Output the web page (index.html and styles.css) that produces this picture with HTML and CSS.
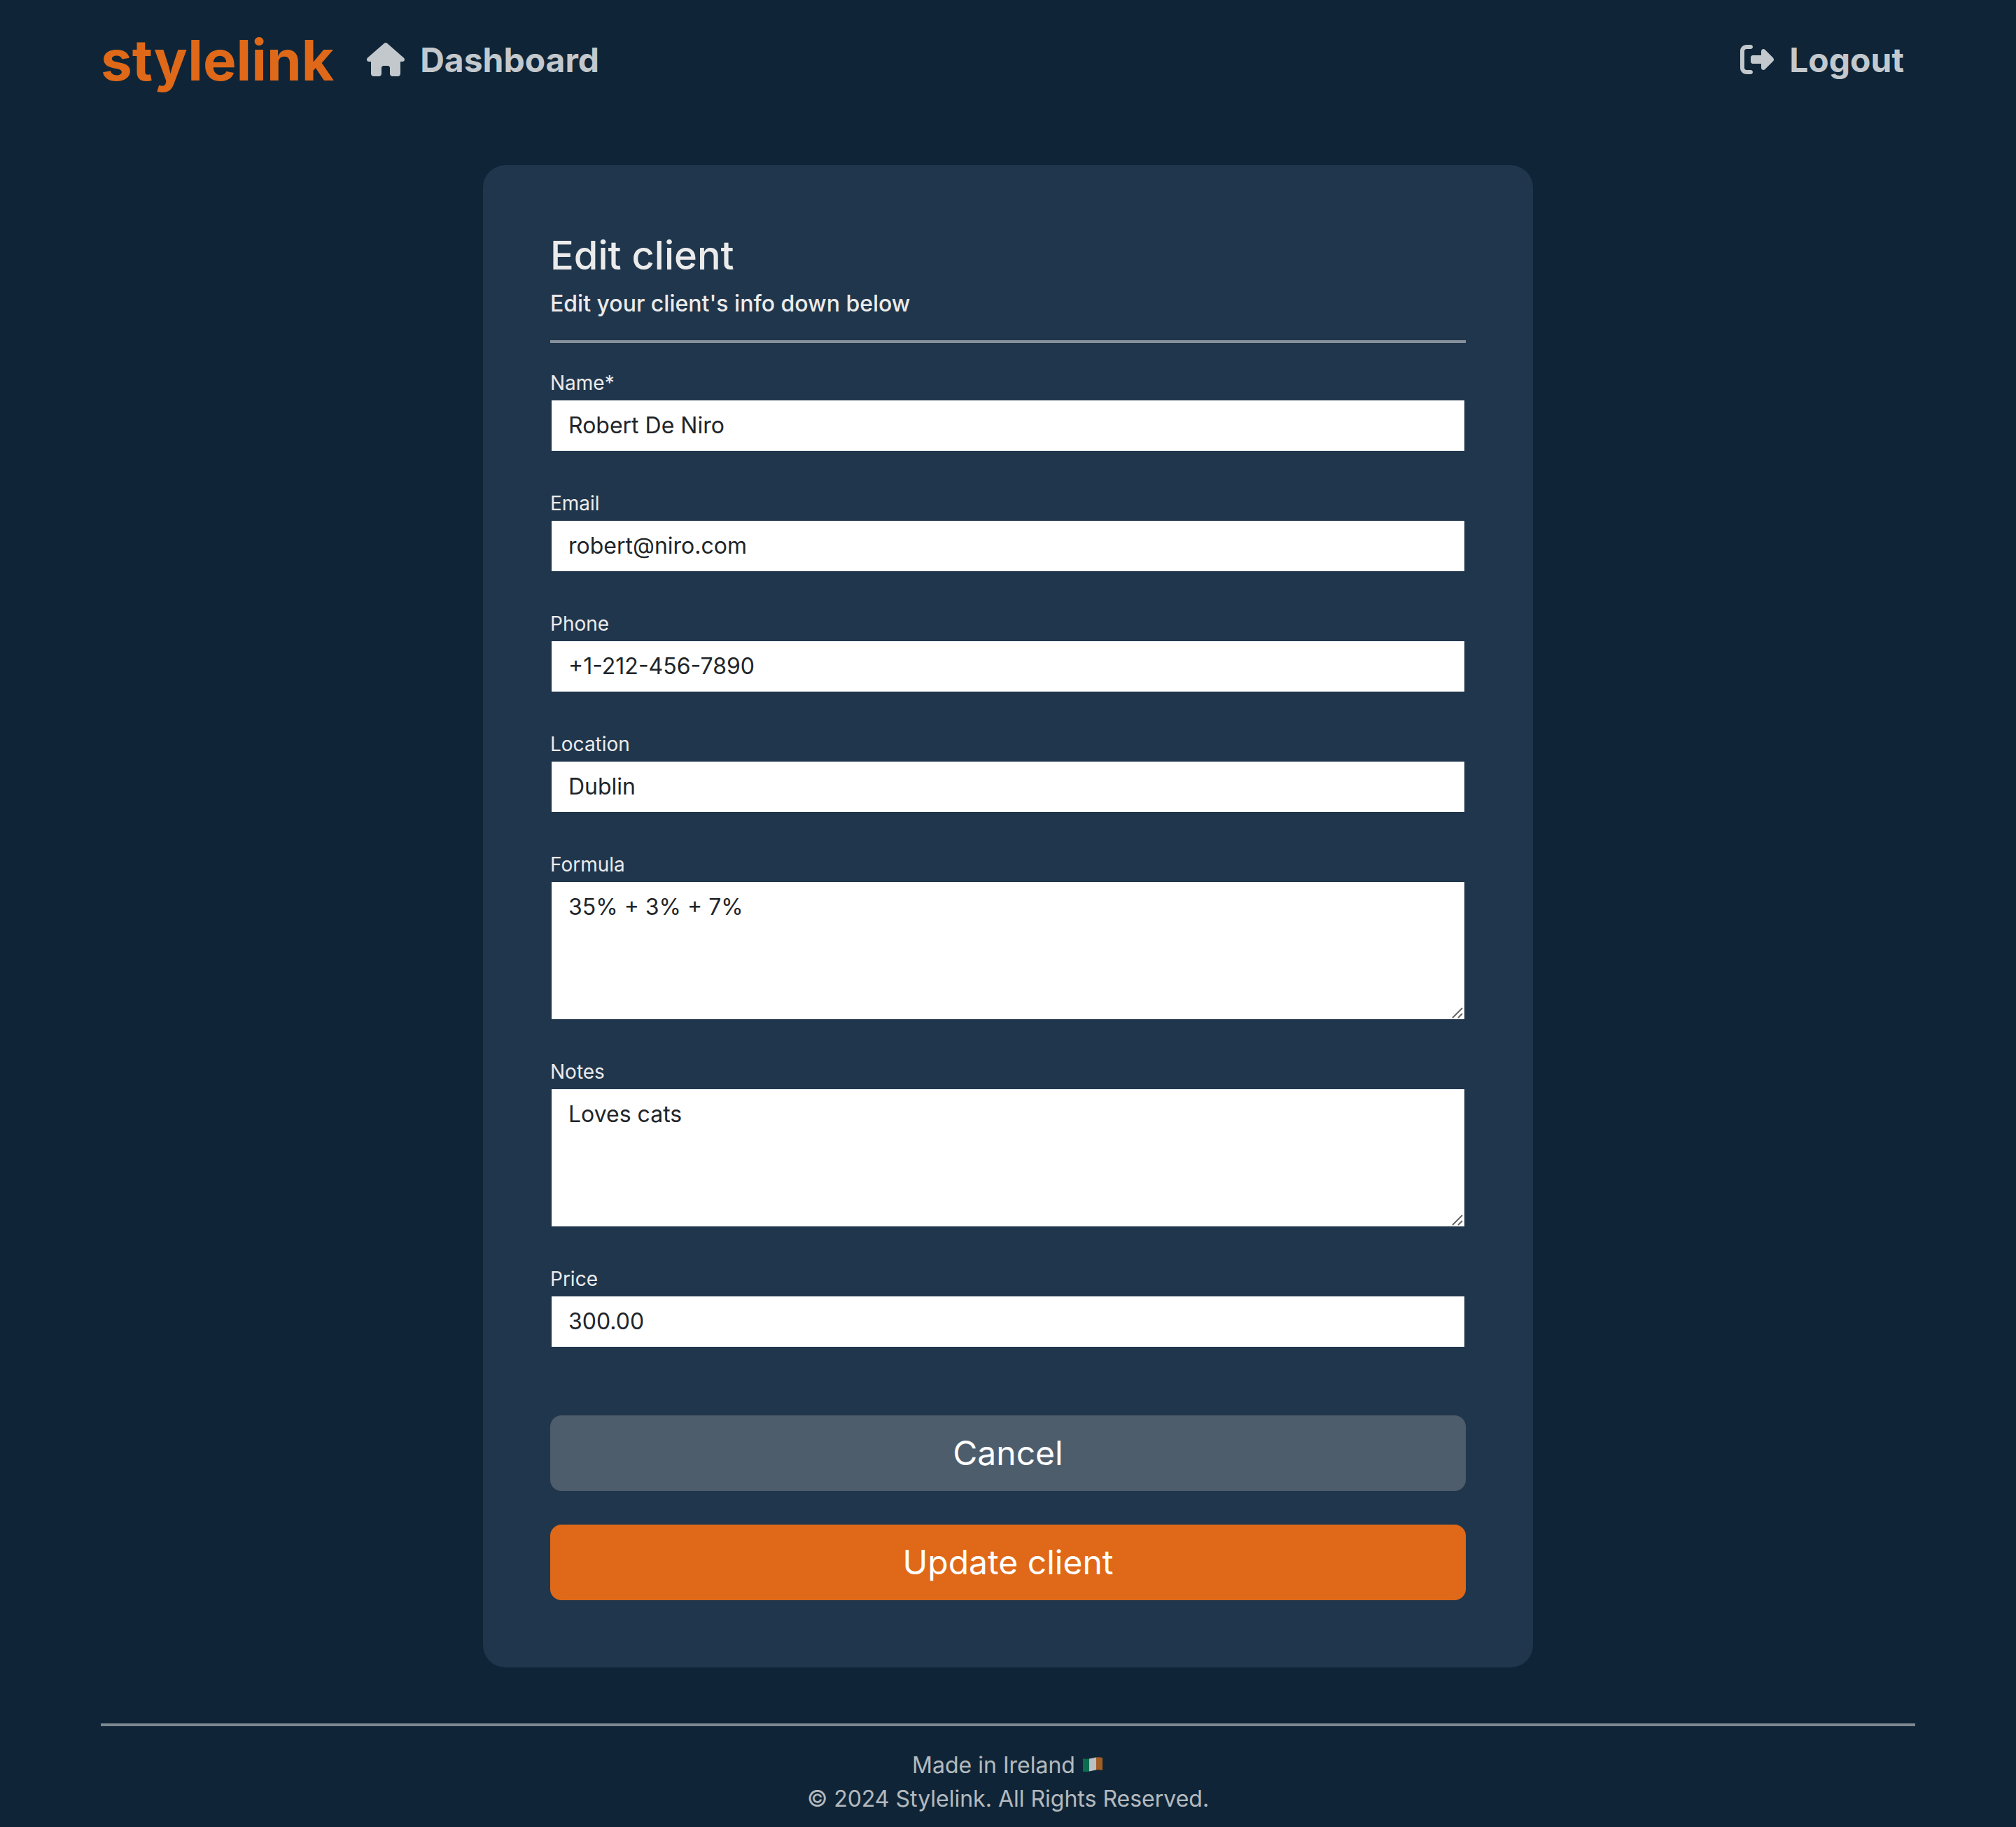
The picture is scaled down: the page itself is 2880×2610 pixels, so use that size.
FILE: index.html
```html
<!DOCTYPE html>
<html lang="en">
<head>
  <meta charset="utf-8">
  <meta name="viewport" content="width=device-width, initial-scale=1">
  <title>Edit client | stylelink</title>
  <link rel="stylesheet" href="styles.css">
</head>
<body>
  <header class="navbar">
    <a class="brand" href="#">stylelink</a>
    <nav class="nav">
      <a class="nav-link" href="#">
        <svg class="icon-house" viewBox="0 0 576 512" aria-hidden="true"><path fill="currentColor" d="M575.8 255.5c0 18-15 32.100-32 32.100h-32l.7 160.200c0 2.700-.2 5.400-.5 8.100V472c0 22.100-17.900 40-40 40H456c-1.100 0-2.200 0-3.300-.1c-1.400 .1-2.800 .1-4.200 .1H416 392c-22.100 0-40-17.900-40-40V448 384c0-17.700-14.300-32-32-32H256c-17.700 0-32 14.300-32 32v64 24c0 22.100-17.900 40-40 40H160 128.100c-1.500 0-3-.1-4.500-.2c-1.200 .1-2.400 .2-3.600 .2H104c-22.100 0-40-17.900-40-40V360c0-.9 0-1.900 .1-2.800V287.600H32c-18 0-32-14-32-32.100c0-9 3-17 10-24L266.400 8c7-7 15-8 22-8s15 2 21 7L564.800 231.500c8 7 12 15 11 24z"/></svg>
        <span>Dashboard</span>
      </a>
      <a class="nav-link" href="#">
        <svg class="icon-logout" viewBox="0 0 512 512" aria-hidden="true"><path fill="currentColor" d="M377.900 105.900L500.700 228.700c7.200 7.200 11.300 17.100 11.300 27.300s-4.100 20.100-11.300 27.300L377.900 406.100c-6.400 6.400-15 9.900-24 9.900c-18.700 0-33.900-15.200-33.900-33.900l0-62.100-128 0c-17.700 0-32-14.300-32-32l0-64c0-17.700 14.300-32 32-32l128 0 0-62.100c0-18.700 15.200-33.900 33.900-33.900c9 0 17.600 3.600 24 9.900zM160 96L96 96c-17.700 0-32 14.300-32 32l0 256c0 17.700 14.300 32 32 32l64 0c17.700 0 32 14.300 32 32s-14.300 32-32 32l-64 0c-53 0-96-43-96-96L0 128C0 75 43 32 96 32l64 0c17.700 0 32 14.300 32 32s-14.300 32-32 32z"/></svg>
        <span>Logout</span>
      </a>
    </nav>
  </header>

  <main class="main">
    <section class="card">
      <h1 class="title">Edit client</h1>
      <p class="subtitle">Edit your client's info down below</p>
      <hr class="rule">
      <form class="form">
        <div class="field">
          <label class="label" for="name">Name*</label>
          <input class="control control-line" id="name" type="text" value="Robert De Niro" required>
        </div>
        <div class="field">
          <label class="label" for="email">Email</label>
          <input class="control control-line" id="email" type="email" value="robert@niro.com">
        </div>
        <div class="field">
          <label class="label" for="phone">Phone</label>
          <input class="control control-line" id="phone" type="tel" value="+1-212-456-7890">
        </div>
        <div class="field">
          <label class="label" for="location">Location</label>
          <input class="control control-line" id="location" type="text" value="Dublin">
        </div>
        <div class="field">
          <label class="label" for="formula">Formula</label>
          <div class="area">
            <textarea class="control control-area" id="formula">35% + 3% + 7%</textarea>
            <svg class="grip" viewBox="0 0 16 16" aria-hidden="true"><path d="M1 15 15 1M9 15 15 9"/></svg>
          </div>
        </div>
        <div class="field">
          <label class="label" for="notes">Notes</label>
          <div class="area">
            <textarea class="control control-area" id="notes">Loves cats</textarea>
            <svg class="grip" viewBox="0 0 16 16" aria-hidden="true"><path d="M1 15 15 1M9 15 15 9"/></svg>
          </div>
        </div>
        <div class="field">
          <label class="label" for="price">Price</label>
          <input class="control control-line" id="price" type="text" inputmode="decimal" value="300.00">
        </div>
        <div class="actions">
          <button class="btn btn-secondary" type="button">Cancel</button>
          <button class="btn btn-primary" type="submit">Update client</button>
        </div>
      </form>
    </section>
  </main>

  <footer class="footer">
    <hr class="rule">
    <div class="footer-text">
      <p>Made in Ireland <svg class="flag" viewBox="0 0 32 24" role="img" aria-label="Flag of Ireland"><path fill="#0b8457" d="M2 1c3 1 6 1 9 0.500v18c-3 .8-6 .8-9 0z"/><path fill="#f4f4f4" d="M11 1.500c4-.5 6-1.500 10-2v18c-4 .5-6 1.500-10 2z"/><path fill="#d2701c" d="M21-.5c3-.5 6-.3 9 .5v18c-3-.8-6-1-9-.5z"/></svg></p>
      <p>© 2024 Stylelink. All Rights Reserved.</p>
    </div>
  </footer>
</body>
</html>
```
FILE: styles.css
```css
*,
*::before,
*::after {
  box-sizing: border-box;
}

body {
  margin: 0;
  min-height: 100vh;
  display: flex;
  flex-direction: column;
  background: #0f2537;
  color: #ebebeb;
  font-family: Inter, "Liberation Sans", sans-serif;
  font-size: 32px;
  line-height: 48px;
}

h1,
p {
  margin: 0;
}

/* Header */
.navbar {
  display: flex;
  align-items: center;
  gap: 47px;
  padding: 26px 5%;
}

.brand {
  color: #df6919;
  font-size: 80px;
  font-weight: 700;
  line-height: 120px;
  text-decoration: none;
}

.nav {
  flex: 1;
  display: flex;
  justify-content: space-between;
  padding-right: 16px;
}

.nav-link {
  display: flex;
  align-items: center;
  gap: 22px;
  color: rgba(255, 255, 255, 0.75);
  font-size: 48px;
  font-weight: 700;
  line-height: 72px;
  text-decoration: none;
}

.icon-house,
.icon-logout {
  height: 48px;
  margin-bottom: 2px;
}

.icon-house {
  width: 54px;
}

.icon-logout {
  width: 48px;
}

/* Card */
.main {
  flex: 1;
  padding: 64px 5% 80px;
}

.card {
  max-width: 1500px;
  margin: 0 auto;
  padding: 96px;
  border-radius: 32px;
  background: #20364c;
}

.title {
  margin-bottom: 16px;
  font-size: 56px;
  font-weight: 500;
  line-height: 66px;
}

.subtitle {
  font-weight: 500;
  line-height: 40px;
}

.rule {
  height: 4px;
  margin: 0;
  border: 0;
  background: #ebebeb;
  opacity: 0.5;
}

.card .rule {
  margin: 32px 0 36px;
}

/* Form */
.form {
  display: flex;
  flex-direction: column;
  gap: 52px;
}

.field {
  display: flex;
  flex-direction: column;
  gap: 2px;
}

.label {
  font-size: 28px;
  line-height: 42px;
}

.control {
  display: block;
  width: 100%;
  padding: 12px 24px;
  border: 2px solid transparent;
  border-radius: 0;
  background: #fff;
  background-clip: padding-box;
  color: #212529;
  font: inherit;
}

.control-line {
  height: 76px;
  padding-top: 11px;
  padding-bottom: 13px;
}

.control-area {
  height: 200px;
  resize: none;
}

.area {
  position: relative;
}

.grip {
  position: absolute;
  right: 4px;
  bottom: 3px;
  width: 16px;
  height: 16px;
  fill: none;
  stroke: #666;
  stroke-width: 2;
  pointer-events: none;
}

.actions {
  display: flex;
  flex-direction: column;
  gap: 48px;
  padding-top: 44px;
}

.btn {
  width: 100%;
  padding: 18px 32px;
  border: 0;
  border-radius: 16px;
  color: #fff;
  font: inherit;
  font-size: 48px;
  line-height: 72px;
  cursor: pointer;
}

.btn-secondary {
  background: #4e5d6c;
}

.btn-primary {
  background: #df6919;
}

/* Footer */
.footer {
  padding: 0 5% 16px;
}

.footer-text {
  margin-top: 32px;
  text-align: center;
  opacity: 0.75;
}

.flag {
  width: 32px;
  height: 24px;
  overflow: visible;
  vertical-align: -2px;
}
```
